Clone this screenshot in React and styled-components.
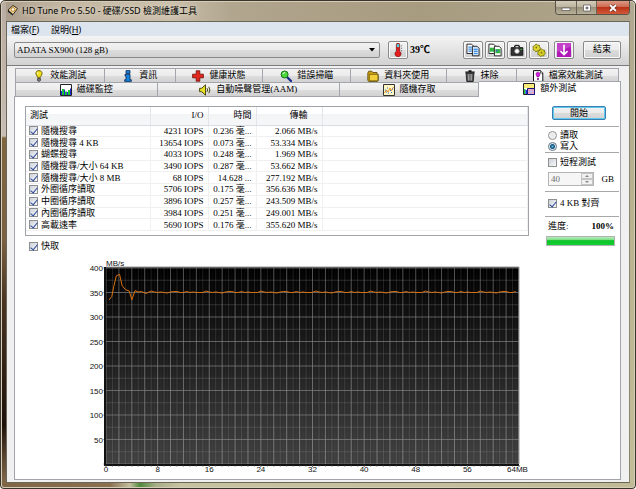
import React, { useState } from "react";
import styled, { createGlobalStyle, css } from "styled-components";

const GlobalStyle = createGlobalStyle`
  * {
    box-sizing: border-box;
  }

  body {
    margin: 0;
    font-family: "Liberation Serif", "Noto Sans CJK TC", serif;
    font-size: 9px;
    line-height: 11px;
    color: #000;
  }

  button, input, select {
    font: inherit;
    color: inherit;
    margin: 0;
  }
`;

const Window = styled.div`
  min-height: 100vh;
  display: flex;
  flex-direction: column;
  padding: 0 6px 6px 6px;
  border-radius: 5px 5px 4px 4px;
  background:
    linear-gradient(90deg, #7d6546 0, #8a7150 110px, #c3bf9e 130px, #4f8a3c 140px, #a9ad88 156px, #c6c3a3 180px, #c0bb96 100%) bottom / 100% 6px no-repeat,
    linear-gradient(180deg, #b9aca2 0, #c4b9b0 110px, #c9bfb6 136px, #80663f 138px, #7b6142 240px, #4a3422 300px, #1d120b 425px, #5f4a33 460px, #8a7150 100%) left / 6px 100% no-repeat,
    linear-gradient(180deg, #b0a892 0, #b9b28f 40%, #c3bd98 100%) right / 6px 100% no-repeat,
    linear-gradient(90deg, #a99b8a 0, #c2b6a2 60px, #cabfab 170px, #b1a68e 230px, #a79c80 420px, #aea58c 100%);
  box-shadow: inset 0 0 0 1px #3b342b, inset 0 0 0 2px #d6cdb8;
`;

const TitleBar = styled.header`
  display: flex;
  height: 21px;
  padding-left: 1px;
  gap: 4px;
  align-items: center;
`;

const Title = styled.h1`
  margin: 0;
  flex: 1;
  font: 9px/16px "Noto Sans", "Noto Sans CJK TC", sans-serif;
  text-shadow: 0 0 5px #f4ecdc;
  white-space: nowrap;
`;

const CaptionButtons = styled.div`
  display: flex;
  align-self: flex-start;
  margin-top: 1px;
  border: 1px solid #5a5348;
  border-top: 0;
  border-radius: 0 0 4px 4px;
  overflow: hidden;
`;

const CaptionButton = styled.button`
  width: ${({ $close }) => ($close ? "33px" : "20px")};
  height: 13px;
  padding: 0;
  display: flex;
  align-items: center;
  justify-content: center;
  border: 0;
  border-left: ${({ $first }) => ($first ? "0" : "1px solid #6b6457")};
  background: ${({ $close }) =>
    $close
      ? "linear-gradient(#dc9a86 0, #cf6a50 45%, #b93418 50%, #d4583a 100%)"
      : "linear-gradient(#d3ccbb 0, #bdb49f 45%, #9a917c 50%, #b9b09a 100%)"};
`;

const Client = styled.main`
  flex: 1;
  display: flex;
  flex-direction: column;
  border: 1px solid #6c6659;
  border-right-color: #8b856f;
  background: #f0f0f0;
`;

const MenuBar = styled.nav`
  display: flex;
  height: 14px;
  padding-left: 4px;
  gap: 12px;
  background: #dce4ee;
`;

const MenuItem = styled.button`
  padding: 0;
  border: 0;
  background: none;
  font: 9px/11px "Noto Sans", "Noto Sans CJK TC", sans-serif;
`;

const Toolbar = styled.div`
  display: flex;
  align-items: center;
  height: 30px;
  padding: 0 8px 2px 7px;
  background: linear-gradient(#f4f4f4, #d2d2d2);
  border-bottom: 1px solid #7c7c7c;
`;

const DriveBox = styled.div`
  flex: 1;
  display: flex;
  align-items: center;
  height: 16px;
  padding-right: 4px;
  margin-right: 8px;
  border: 1px solid #8a8a8a;
  border-radius: 2px;
  background: linear-gradient(#f2f2f2 0, #ebebeb 50%, #dcdcdc 51%, #d2d2d2 100%);
`;

const DriveSelect = styled.select`
  flex: 1;
  min-width: 0;
  appearance: none;
  border: 0;
  padding: 1px 2px 0;
  background: none;
  outline: 0;
`;

const ToolButton = styled.button`
  display: flex;
  align-items: center;
  justify-content: center;
  width: ${({ $wide }) => ($wide ? "38px" : "20px")};
  height: 18px;
  padding: 0;
  border: 1px solid #8a8a8a;
  border-radius: 2px;
  box-shadow: inset 0 0 0 1px #fafafa;
  background: linear-gradient(#f2f2f2 0, #ebebeb 50%, #dddddd 51%, #cfcfcf 100%);
`;

const Temperature = styled.span`
  width: 55px;
  padding-left: 2px;
  font-size: 10px;
  font-weight: bold;
`;

const ToolGroup = styled.div`
  display: flex;
  gap: 2px;
  margin-right: ${({ $space }) => $space}px;
`;

const Tabs = styled.div`
  padding: 2px 8px 0 8px;
`;

const TabRow = styled.div`
  display: flex;
  margin-right: ${({ $back }) => ($back ? "2px" : "0")};
`;

const Tab = styled.button`
  flex: ${({ $grow }) => $grow} 1 0;
  min-width: 0;
  height: 14px;
  display: flex;
  align-items: center;
  justify-content: center;
  gap: 5px;
  padding: 0;
  white-space: nowrap;
  border: 1px solid #a3a5ad;
  border-width: 1px 1px 0 0;
  background: linear-gradient(#f3f3f3 0, #ebebeb 50%, #dddddd 51%, #d2d2d2 100%);

  &:first-child {
    border-left-width: 1px;
  }

  ${({ $active }) =>
    $active &&
    css`
      position: relative;
      height: 16px;
      margin: -1px 0 -1px 0;
      background: #fff;
      padding-bottom: 2px;
    `}
`;

const Panel = styled.section`
  flex: 1;
  display: flex;
  gap: 16px;
  margin: 0 8px 2px 7px;
  padding: 9px 1px 0 10px;
  border: 1px solid #a3a5ad;
  background: #fff;
`;

const Results = styled.div`
  flex: 1;
  min-width: 0;
`;

const TableFrame = styled.div`
  border: 1px solid #a0a3a8;
  padding-bottom: 4px;
`;

const Table = styled.table`
  width: 100%;
  height: 124px;
  table-layout: fixed;
  border-collapse: collapse;
`;

const HeadCell = styled.th`
  height: 18px;
  padding: 0 ${({ $pad }) => $pad || 4}px 0 4px;
  font-weight: normal;
  text-align: ${({ $left }) => ($left ? "left" : "right")};
  background: linear-gradient(#fff 40%, #f3f4f6 41%, #f6f7f9 100%);
  border-right: 1px solid #e3e6ea;
  border-bottom: 1px solid #d9dce0;
`;

const Cell = styled.td`
  padding: 0 4px 0 3px;
  line-height: 10px;
  text-align: ${({ $left }) => ($left ? "left" : "right")};
  white-space: nowrap;
  border-right: 1px solid #f0f0f0;
  border-bottom: 1px solid #f0f0f0;
`;

const CheckLabel = styled.label`
  display: flex;
  align-items: center;
  gap: 3px;
  height: ${({ $dense }) => ($dense ? "10px" : "11px")};
  white-space: nowrap;
`;

const CheckBox = styled.input.attrs({ type: "checkbox" })`
  appearance: none;
  flex: none;
  display: flex;
  justify-content: center;
  width: 9px;
  height: 9px;
  border: 1px solid #8e8f8f;
  background: linear-gradient(135deg, #ccd2da, #f8f8f8);

  &:checked::after {
    content: "";
    width: 3px;
    height: 6px;
    border: solid #2b479c;
    border-width: 0 1px 1px 0;
    transform: rotate(40deg);
  }
`;

const Radio = styled.input.attrs({ type: "radio" })`
  appearance: none;
  flex: none;
  width: 9px;
  height: 9px;
  border: 1px solid #8e8f8f;
  border-radius: 50%;
  background: radial-gradient(#e4e6e8, #fafafa);

  &:checked {
    border-color: #5f7686;
    background: radial-gradient(circle, #58b8e0 0, #14527c 2px, #dfe9f0 3px, #eef3f6 4px);
  }
`;

const CacheRow = styled.div`
  padding: 5px 0 6px 4px;
`;

const ChartSvg = styled.svg`
  display: block;
  width: 100%;
  height: auto;

  text {
    font-family: "Liberation Sans", sans-serif;
    font-size: 8px;
    fill: #111;
  }
`;

const Side = styled.aside`
  flex: none;
  width: 74px;
`;

const StartButton = styled.button`
  display: block;
  width: 54px;
  height: 14px;
  margin-left: 7px;
  padding: 0;
  line-height: 11px;
  border: 1px solid #3c7fb1;
  border-radius: 2px;
  box-shadow: inset 0 0 0 1px #5fc8ee;
  background: linear-gradient(#f2f2f2 0, #ebebeb 50%, #dcdcdc 51%, #d2d2d2 100%);
`;

const Group = styled.div`
  border-top: 1px solid #a8a8a8;
  margin-top: ${({ $before }) => $before}px;
  padding: ${({ $inside }) => $inside}px 0 0 3px;
`;

const SpinRow = styled.div`
  display: flex;
  align-items: center;
  justify-content: space-between;
  padding-right: 5px;
  margin-top: 4px;
`;

const SpinBox = styled.div`
  display: flex;
  width: 46px;
  height: 14px;
  border: 1px solid #b4b4b4;
  background: #f6f6f6;
`;

const SpinInput = styled.input`
  flex: 1;
  min-width: 0;
  padding: 0 2px;
  border: 0;
  background: none;
  color: #6d6d6d;
`;

const SpinButtons = styled.div`
  width: 12px;
  display: flex;
  flex-direction: column;

  button {
    flex: 1;
    display: flex;
    align-items: center;
    justify-content: center;
    min-height: 0;
    padding: 0;
    border: 1px solid #c4c4c4;
    background: #f0f0f0;
  }
`;

const ProgressLine = styled.div`
  display: flex;
  justify-content: space-between;
  padding-right: 5px;
`;

const ProgressTrack = styled.div`
  height: 10px;
  margin: 4px 4px 0 -2px;
  border: 1px solid #b2b2b2;
  background: #e6e6e6;
`;

const ProgressFill = styled.div`
  height: 100%;
  background: linear-gradient(#b5efb9 0, #7fdf88 35%, #0fc32b 45%, #12cf30 100%);
`;

const Icon = ({ size = 12, children }) => (
  <svg width={size} height={size} viewBox="0 0 12 12" aria-hidden="true">
    {children}
  </svg>
);

const icons = {
  bench: (
    <>
      <path d="M6 .6C3.9.6 2.7 2 2.9 3.8c.2 1.5 1.5 2 1.7 3.6h2.8c.2-1.6 1.5-2.1 1.7-3.6C9.3 2 8.1.6 6 .6z" fill="#f3e21c" stroke="#4a4400" strokeWidth=".8" />
      <path d="M4.7 2.5v1.5" stroke="#fff" />
      <path d="M4.5 8.5h3v2L6 11.6l-1.500-1z" fill="#777" stroke="#222" strokeWidth=".6" />
    </>
  ),
  info: (
    <>
      <path d="M4 .6h4v2.800H4z" fill="#1583e0" stroke="#0a2550" strokeWidth=".8" />
      <path d="M3 4.300h5v5.400h1.300v1.700H2.700V9.700H4V6H3z" fill="#1583e0" stroke="#0a2550" strokeWidth=".8" />
    </>
  ),
  health: <path d="M4.2.8h3.600v3.400h3.600v3.600H7.800v3.400H4.200V7.800H.6V4.200h3.600z" fill="#e4261c" stroke="#6e0a06" strokeWidth=".8" />,
  scan: (
    <>
      <path d="M7 7l4 4" stroke="#1c2c8c" strokeWidth="2.4" strokeLinecap="round" />
      <circle cx="4.600" cy="4.500" r="3.500" fill="#4ed83c" stroke="#14701a" />
      <path d="M3 4a2 2 0 0 1 2-1.500" stroke="#e8ffe0" fill="none" />
    </>
  ),
  folder: (
    <>
      <path d="M.8 3l1-1.800h3L6 2.500h4v1.600l1.300.4v6.100l-1 .8H1.800L.8 10.500z" fill="#c79a10" stroke="#54420a" strokeWidth=".8" />
      <path d="M2.5 4.500h8.300v6.200H2.500z" fill="#f0cf3a" stroke="#6b540c" strokeWidth=".6" />
    </>
  ),
  erase: (
    <>
      <path d="M2 3h8l-.8 8.500H2.800z" fill="#555" stroke="#111" strokeWidth=".8" />
      <path d="M1.3 2.200h9.400M4.500.9h3" stroke="#111" strokeWidth="1.2" />
      <path d="M4.3 4l.3 6.500M6 4v6.500M7.700 4l-.3 6.500" stroke="#bbb" strokeWidth=".7" />
    </>
  ),
  fileBench: (
    <>
      <path d="M1.5.6h7l2.300 2.300v8.500H1.500z" fill="#fff" stroke="#111" />
      <path d="M8.5.6v2.500h2.300" fill="#ddd" stroke="#111" strokeWidth=".6" />
      <path d="M6 2.200c-1.600 0-2.200 1-2 2.200.2 1 .9 1.400 1.100 2.600h1.800c.2-1.200.9-1.600 1.100-2.600.2-1.200-.4-2.200-2-2.200z" fill="#d81be0" stroke="#5a0a60" strokeWidth=".5" />
      <path d="M5.2 8h1.600v2H5.200z" fill="#7a1080" />
    </>
  ),
  monitor: (
    <>
      <path d="M.5.5h11v11H.5z" fill="#fff" stroke="#222" />
      <path d="M1 7h1v4H1zM4 5.500h1V11H4zM7 8h1v3H7zM10 4.500h1V11h-1z" fill="#2222e0" />
      <path d="M2 5h2v6H2zM5 7.500h2V11H5zM8 6h2v5H8z" fill="#19c832" />
    </>
  ),
  speaker: (
    <>
      <path d="M.6 4.300h2L6.500.8v10.400L2.600 7.700h-2z" fill="#e8df28" stroke="#3c3a00" strokeWidth=".9" />
      <path d="M8 4.200q1.200 1.800 0 3.600M9.800 2.800q2.200 3.200 0 6.400" stroke="#4a4718" fill="none" />
    </>
  ),
  random: (
    <>
      <path d="M.5.5h11v11H.5z" fill="#fdf7c4" stroke="#333" />
      <path d="M1.500 9l2-3 1.500 2 2-4 1.500 2.500 2-3.500" stroke="#e08a1c" fill="none" strokeWidth=".9" />
      <path d="M2 6h1M4 4h1M5 9h1M8 8.500h1M9 5h1M7 6.500h1M3 8h1" stroke="#3b62d8" />
    </>
  ),
  extra: (
    <>
      <path d="M.5.5h11v11H.5z" fill="#fff" stroke="#222" />
      <path d="M1 1h10v4H1z" fill="#f8ec78" />
      <path d="M1 6h1.500v5H1z" fill="#1bc83a" />
      <path d="M2.500 7H4v4H2.500z" fill="#2030e0" />
      <path d="M4.500 5.500h7v6h-7z" fill="#f0a4c4" stroke="#15157a" />
      <path d="M5 8.500h6M8 6v5" stroke="#a8c8ff" strokeWidth=".7" />
    </>
  ),
  thermo: (
    <>
      <path d="M4.600 1.500a1.400 1.400 0 0 1 2.800 0V7a2.600 2.600 0 1 1-2.800 0z" fill="#e01c1c" stroke="#7a0c0c" strokeWidth=".6" />
      <path d="M5 1h2v2.500H5z" fill="#4ad8e0" />
      <path d="M8.500 2.500h1M8.500 4.500h1M8.500 6.500h1" stroke="#444" strokeWidth=".6" />
    </>
  ),
  copyText: (
    <>
      <path d="M.8 1h4l1.500 1.500V9H.8z" fill="#fff" stroke="#222" strokeWidth=".8" />
      <path d="M2 3.500h3M2 5.200h3M2 7h3" stroke="#3f8fe0" />
      <path d="M5.500 2.800h4l1.700 1.700V11H5.500z" fill="#cfe5fb" stroke="#222" strokeWidth=".8" />
      <path d="M6.700 5.500h3.300M6.700 7.200h3.300M6.700 9h3.300" stroke="#3f8fe0" />
    </>
  ),
  copyImage: (
    <>
      <path d="M.8 1h4l1.500 1.500V9H.8z" fill="#fff" stroke="#222" strokeWidth=".8" />
      <path d="M1.500 4h4v3.500h-4z" fill="#35b544" />
      <path d="M5.500 2.800h4l1.700 1.700V11H5.500z" fill="#fff" stroke="#222" strokeWidth=".8" />
      <path d="M6.300 5.200h4.200v3.600H6.300z" fill="#35b544" />
      <path d="M7 6h1.300v1.300H7z" fill="#3068d8" />
    </>
  ),
  camera: (
    <>
      <path d="M1 4h2.500l.8-2h3.400l.8 2H11v6.500H1z" fill="#333" stroke="#111" strokeWidth=".8" />
      <path d="M4.800 2.600h2.400v1H4.800z" fill="#ddd" />
      <circle cx="6" cy="7" r="2" fill="#fff" stroke="#888" strokeWidth=".6" />
      <path d="M9 5h1.200v1H9z" fill="#35c040" />
    </>
  ),
  options: (
    <>
      <path d="M3.500.8l1.200 1 1.500 0 .3 1.500.9 1.100-1 1.200-.3 1.300-1.600-.1-1.200.8-1-1.200L.9 5.900l.2-1.500L.8 3l1.500-.7z" fill="#e2d92e" stroke="#6d6a0c" strokeWidth=".7" />
      <path d="M8 5l1.200.9 1.500.2.1 1.500.7 1.200-1.100 1-.4 1.300-1.500-.1-1.300.6-.9-1.200-1.400-.6.3-1.500L5 7.200l1.400-.7z" fill="#d9cf22" stroke="#6d6a0c" strokeWidth=".7" />
      <circle cx="3.700" cy="3.900" r=".8" fill="#7c7a20" />
      <circle cx="8.200" cy="8.300" r=".8" fill="#7c7a20" />
    </>
  ),
  download: (
    <>
      <path d="M0 0h12v12H0z" fill="#b018b8" />
      <path d="M0 0h12v3L0 8z" fill="#d76bdc" opacity=".5" />
      <path d="M6 1.500v8.500M3 7l3 3 3-3" stroke="#fff" strokeWidth="1.4" fill="none" />
    </>
  ),
};

const backTabs = [
  { label: "效能測試", icon: "bench", grow: 89 },
  { label: "資訊", icon: "info", grow: 71 },
  { label: "健康狀態", icon: "health", grow: 88 },
  { label: "錯誤掃瞄", icon: "scan", grow: 88 },
  { label: "資料夾使用", icon: "folder", grow: 96 },
  { label: "抹除", icon: "erase", grow: 70 },
  { label: "檔案效能測試", icon: "fileBench", grow: 103 },
];

const frontTabs = [
  { label: "磁碟監控", icon: "monitor", grow: 142 },
  { label: "自動噪聲管理(AAM)", icon: "speaker", grow: 183 },
  { label: "隨機存取", icon: "random", grow: 140 },
  { label: "額外測試", icon: "extra", grow: 142 },
];

const tests = [
  ["隨機搜尋", "4231 IOPS", "0.236 毫...", "2.066 MB/s"],
  ["隨機搜尋 4 KB", "13654 IOPS", "0.073 毫...", "53.334 MB/s"],
  ["蝴蝶搜尋", "4033 IOPS", "0.248 毫...", "1.969 MB/s"],
  ["隨機搜尋/大小 64 KB", "3490 IOPS", "0.287 毫...", "53.662 MB/s"],
  ["隨機搜尋/大小 8 MB", "68 IOPS", "14.628 ...", "277.192 MB/s"],
  ["外圈循序讀取", "5706 IOPS", "0.175 毫...", "356.636 MB/s"],
  ["中圈循序讀取", "3896 IOPS", "0.257 毫...", "243.509 MB/s"],
  ["內圈循序讀取", "3984 IOPS", "0.251 毫...", "249.001 MB/s"],
  ["高載速率", "5690 IOPS", "0.176 毫...", "355.620 MB/s"],
];

// position in MB -> speed in MB/s
const startSpeeds = [
  [0.5, 335], [0.9, 342], [1.2, 362], [1.6, 384], [2.1, 387], [2.5, 364],
  [3, 356], [3.6, 353], [4, 335], [4.5, 354], [5, 351], [5.5, 352], [6.2, 348],
];
const ripple = [350, 353, 351, 350, 351, 350, 349, 351, 352, 352, 350, 350, 352, 350, 351, 350, 350];

const speeds = [...startSpeeds];
for (let mb = 6.5, i = 0; mb < 63.6; mb += 0.5, i++) {
  speeds.push([mb, ripple[i % ripple.length]]);
}

const LEFT = 81;
const RIGHT = 494;
const TOP = 10;
const BOTTOM = 206;
const toX = (mb) => LEFT + (mb * (RIGHT - LEFT)) / 64;
const toY = (speed) => BOTTOM - (speed * (BOTTOM - TOP)) / 400;
const range = (count) => Array.from({ length: count }, (_, i) => i);

const SpeedChart = () => (
  <ChartSvg viewBox="0 0 504 220" role="img" aria-label="MB/s">
    <defs>
      <linearGradient id="plot" x1="0" y1="0" x2="0" y2="1">
        <stop offset="0" stopColor="#000" />
        <stop offset="1" stopColor="#404040" />
      </linearGradient>
    </defs>
    <rect x={LEFT - 1} y={TOP - 1} width={RIGHT - LEFT + 1} height={BOTTOM - TOP + 2} fill="url(#plot)" />
    {range(129).map((i) => (
      <line
        key={i}
        x1={toX(i / 2)}
        x2={toX(i / 2)}
        y1={TOP}
        y2={BOTTOM}
        stroke="#fff"
        strokeOpacity={i % 4 === 0 ? 0.32 : i % 2 === 0 ? 0.12 : 0.03}
      />
    ))}
    {range(17).map((i) => (
      <line
        key={i}
        x1={LEFT - (i % 2 ? 1 : 3)}
        x2={RIGHT}
        y1={toY(i * 25)}
        y2={toY(i * 25)}
        stroke="#888"
        strokeOpacity={i % 2 ? 0.3 : 0.65}
      />
    ))}
    <path d={`M${LEFT - 1} ${TOP - 1}V${BOTTOM + 1}H${RIGHT}`} fill="none" stroke="#111" strokeWidth="2" />
    <path d={`M${LEFT} ${TOP - 1}H${RIGHT}V${BOTTOM}`} fill="none" stroke="#999" />
    {range(65).map((i) => (
      <line key={i} x1={toX(i)} x2={toX(i)} y1={BOTTOM + 1} y2={BOTTOM + 3} stroke="#555" strokeOpacity={i % 8 ? 0.5 : 1} />
    ))}
    <polyline points={speeds.map(([mb, speed]) => `${toX(mb)},${toY(speed)}`).join(" ")} fill="none" stroke="#d9700f" />
    <text x={LEFT} y={TOP - 2}>MB/s</text>
    {range(8).map((i) => (
      <text key={i} x={LEFT - 3} y={toY((i + 1) * 50) + 3} textAnchor="end">
        {(i + 1) * 50}
      </text>
    ))}
    {range(8).map((i) => (
      <text key={i} x={toX(i * 8)} y={BOTTOM + 8} textAnchor="middle">
        {i * 8}
      </text>
    ))}
    <text x={toX(64) - 12} y={BOTTOM + 8}>64MB</text>
  </ChartSvg>
);

const TabButton = ({ tab, active }) => (
  <Tab role="tab" aria-selected={active} $grow={tab.grow} $active={active}>
    <Icon>{icons[tab.icon]}</Icon>
    {tab.label}
  </Tab>
);

const Check = ({ label, checked = false, dense }) => (
  <CheckLabel $dense={dense}>
    <CheckBox defaultChecked={checked} />
    {label}
  </CheckLabel>
);

const App = () => {
  const [mode, setMode] = useState("write");
  const progress = 100;

  return (
    <>
      <GlobalStyle />
      <Window>
        <TitleBar>
          <svg width="11" height="11" viewBox="0 0 11 11" aria-hidden="true">
            <path d="M1 5l5-4.500 4.500 3L6 9.500z" fill="#f0d9a0" stroke="#3a2c18" />
            <path d="M1 5l5 4.500v1.300L.8 6.800z" fill="#222" />
            <circle cx="6" cy="4.500" r="1.800" fill="#fff" stroke="#c08420" />
          </svg>
          <Title>HD Tune Pro 5.50 - 硬碟/SSD 檢測維護工具</Title>
          <CaptionButtons>
            <CaptionButton $first aria-label="最小化">
              <svg width="10" height="8" viewBox="0 0 10 8">
                <path d="M1 4h8v2.500H1z" fill="#fff" stroke="#555" strokeWidth=".7" />
              </svg>
            </CaptionButton>
            <CaptionButton aria-label="最大化">
              <svg width="10" height="8" viewBox="0 0 10 8">
                <path d="M1.500 1h7v6h-7zM4 3.200v1.600h2V3.200z" fill="#fff" fillRule="evenodd" stroke="#555" strokeWidth=".7" />
              </svg>
            </CaptionButton>
            <CaptionButton $close aria-label="關閉">
              <svg width="10" height="8" viewBox="0 0 10 8">
                <path d="M2 1l6 6M8 1L2 7" stroke="#5c2a20" strokeWidth="3" />
                <path d="M2 1l6 6M8 1L2 7" stroke="#fff" strokeWidth="1.8" />
              </svg>
            </CaptionButton>
          </CaptionButtons>
        </TitleBar>
        <Client>
          <MenuBar>
            <MenuItem>檔案(<u>F</u>)</MenuItem>
            <MenuItem>說明(<u>H</u>)</MenuItem>
          </MenuBar>
          <Toolbar>
            <DriveBox>
              <DriveSelect aria-label="ADATA SX900 (128 gB)">
                <option>ADATA SX900 (128 gB)</option>
              </DriveSelect>
              <svg width="6" height="4" viewBox="0 0 6 4" aria-hidden="true">
                <path d="M0 0h6L3 3.500z" />
              </svg>
            </DriveBox>
            <ToolButton aria-label="39℃"><Icon size={14}>{icons.thermo}</Icon></ToolButton>
            <Temperature>39℃</Temperature>
            <ToolGroup $space={5}>
              {["copyText", "copyImage", "camera", "options"].map((name) => (
                <ToolButton key={name} aria-label={name}><Icon size={14}>{icons[name]}</Icon></ToolButton>
              ))}
            </ToolGroup>
            <ToolGroup $space={9}>
              <ToolButton aria-label="download"><Icon size={14}>{icons.download}</Icon></ToolButton>
            </ToolGroup>
            <ToolButton $wide>結束</ToolButton>
          </Toolbar>
          <Tabs role="tablist">
            <TabRow $back>
              {backTabs.map((tab) => (
                <TabButton key={tab.label} tab={tab} active={false} />
              ))}
            </TabRow>
            <TabRow>
              {frontTabs.map((tab) => (
                <TabButton key={tab.label} tab={tab} active={tab.icon === "extra"} />
              ))}
            </TabRow>
          </Tabs>
          <Panel>
            <Results>
              <TableFrame>
                <Table>
                  <colgroup>
                    <col style={{ width: 124 }} />
                    <col style={{ width: 58 }} />
                    <col style={{ width: 48 }} />
                    <col style={{ width: 66 }} />
                    <col />
                  </colgroup>
                  <thead>
                    <tr>
                      <HeadCell $left>測試</HeadCell>
                      <HeadCell>I/O</HeadCell>
                      <HeadCell>時間</HeadCell>
                      <HeadCell $pad={14}>傳輸</HeadCell>
                      <HeadCell />
                    </tr>
                  </thead>
                  <tbody>
                    {tests.map(([name, iops, time, rate]) => (
                      <tr key={name}>
                        <Cell $left><Check label={name} checked dense /></Cell>
                        <Cell>{iops}</Cell>
                        <Cell>{time}</Cell>
                        <Cell>{rate}</Cell>
                        <Cell />
                      </tr>
                    ))}
                  </tbody>
                </Table>
              </TableFrame>
              <CacheRow>
                <Check label="快取" checked />
              </CacheRow>
              <SpeedChart />
            </Results>
            <Side>
              <StartButton>開始</StartButton>
              <Group $before={6} $inside={3}>
                <CheckLabel>
                  <Radio name="mode" checked={mode === "read"} onChange={() => setMode("read")} />
                  讀取
                </CheckLabel>
                <CheckLabel>
                  <Radio name="mode" checked={mode === "write"} onChange={() => setMode("write")} />
                  寫入
                </CheckLabel>
              </Group>
              <Group $before={0} $inside={4}>
                <Check label="短程測試" />
                <SpinRow>
                  <SpinBox>
                    <SpinInput id="size" defaultValue="40" disabled />
                    <SpinButtons>
                      <button disabled aria-label="+">
                        <svg width="4" height="2" viewBox="0 0 4 2"><path d="M0 2h4L2 0z" fill="#888" /></svg>
                      </button>
                      <button disabled aria-label="-">
                        <svg width="4" height="2" viewBox="0 0 4 2"><path d="M0 0h4L2 2z" fill="#888" /></svg>
                      </button>
                    </SpinButtons>
                  </SpinBox>
                  <label htmlFor="size">GB</label>
                </SpinRow>
              </Group>
              <Group $before={5} $inside={6}>
                <Check label="4 KB 對齊" checked />
              </Group>
              <Group $before={7} $inside={4}>
                <ProgressLine>
                  <span>進度:</span>
                  <b>{progress}%</b>
                </ProgressLine>
                <ProgressTrack role="progressbar" aria-valuenow={progress}>
                  <ProgressFill style={{ width: `${progress}%` }} />
                </ProgressTrack>
              </Group>
            </Side>
          </Panel>
        </Client>
      </Window>
    </>
  );
};

export default App;
